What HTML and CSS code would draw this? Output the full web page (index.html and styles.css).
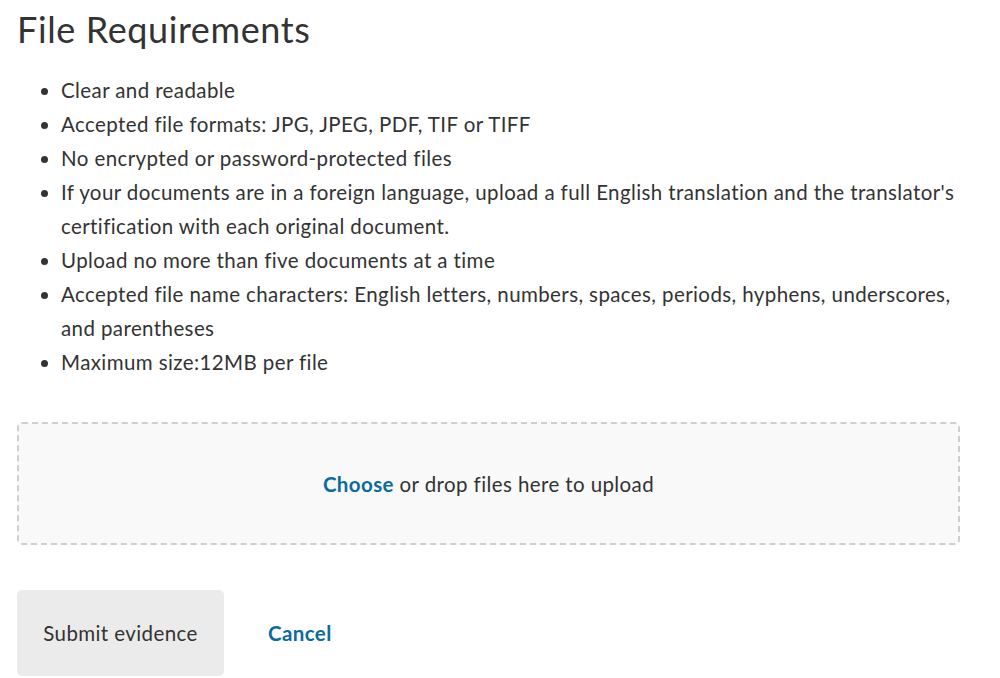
FILE: index.html
```html
<!DOCTYPE html>
<html lang="en">
<head>
<meta charset="utf-8">
<link rel="stylesheet" href="styles.css">
</head>
<body>
<main class="page">
  <h2 class="title">File Requirements</h2>
  <ul class="reqs">
    <li>Clear and readable</li>
    <li>Accepted file formats: JPG, JPEG, PDF, TIF or TIFF</li>
    <li>No encrypted or password-protected files</li>
    <li>If your documents are in a foreign language, upload a full English translation and the translator's certification with each original document.</li>
    <li>Upload no more than five documents at a time</li>
    <li>Accepted file name characters: English letters, numbers, spaces, periods, hyphens, underscores, and parentheses</li>
    <li>Maximum size:12MB per file</li>
  </ul>
  <div class="drop">
    <span><a class="link" href="#">Choose</a> or drop files here to upload</span>
  </div>
  <div class="actions">
    <button class="btn">Submit evidence</button>
    <a class="link cancel" href="#">Cancel</a>
  </div>
</main>
</body>
</html>
```
FILE: styles.css
```css
html, body {
  margin: 0;
  padding: 0;
  background: #fff;
}
body {
  font-family: "Lato", "Noto Sans", sans-serif;
  color: #333;
  letter-spacing: 0.4px;
}
.page {
  width: 943px;
  padding: 0 0 0 17px;
}
.title {
  margin: 0;
  padding-top: 8px;
  font-size: 36px;
  font-weight: 400;
  line-height: 42px;
  letter-spacing: 0.6px;
  color: #333;
}
.reqs {
  margin: 23px 0 0 0;
  padding-left: 44px;
  font-size: 20.5px;
  line-height: 34px;
}
.drop {
  margin-top: 43px;
  height: 119px;
  border: 2px dashed #cfcfcf;
  border-radius: 5px;
  background: #f9f9f9;
  display: flex;
  align-items: center;
  justify-content: center;
  font-size: 20.5px;
}
.link {
  color: #0b6b9d;
  font-weight: 700;
  text-decoration: none;
}
.actions {
  margin-top: 45px;
  display: flex;
  align-items: center;
  gap: 44px;
}
.btn {
  width: 207px;
  height: 86px;
  border: none;
  border-radius: 5px;
  background: #ebebeb;
  color: #333;
  font-family: inherit;
  font-size: 20.5px;
  letter-spacing: 0.4px;
}
.cancel {
  font-size: 20.5px;
}
```
